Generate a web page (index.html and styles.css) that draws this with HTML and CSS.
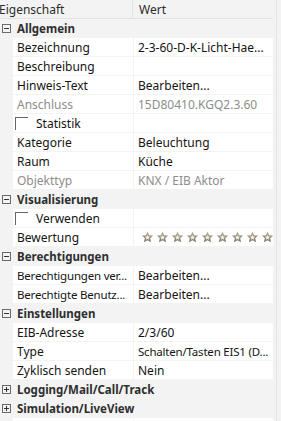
FILE: index.html
```html
<!DOCTYPE html>
<html lang="de">
<head>
<meta charset="utf-8">
<link rel="stylesheet" href="styles.css">
</head>
<body>
<div class="frame">
  <div class="table">
    <div class="header">
      <div class="hcell hname">Eigenschaft</div>
      <div class="hcell hval">Wert</div>
    </div>
    <div class="group"><span class="exp"><svg width="9" height="9" viewBox="0 0 9 9"><rect x="0.5" y="0.5" width="8" height="8" fill="none" stroke="#6a6a6a"/><line x1="2" y1="4.5" x2="7" y2="4.5" stroke="#333"/></svg></span><span class="gtitle">Allgemein</span></div>
    <div class="row"><div class="name">Bezeichnung</div><div class="val">2-3-60-D-K-Licht-Hae...</div></div>
    <div class="row"><div class="name">Beschreibung</div><div class="val"></div></div>
    <div class="row"><div class="name">Hinweis-Text</div><div class="val">Bearbeiten...</div></div>
    <div class="row dis"><div class="name">Anschluss</div><div class="val">15D80410.KGQ2.3.60</div></div>
    <div class="row"><div class="name chk"><span class="box"></span>Statistik</div><div class="val"></div></div>
    <div class="row"><div class="name">Kategorie</div><div class="val">Beleuchtung</div></div>
    <div class="row"><div class="name">Raum</div><div class="val">Küche</div></div>
    <div class="row dis"><div class="name">Objekttyp</div><div class="val">KNX / EIB Aktor</div></div>
    <div class="group"><span class="exp"><svg width="9" height="9" viewBox="0 0 9 9"><rect x="0.5" y="0.5" width="8" height="8" fill="none" stroke="#6a6a6a"/><line x1="2" y1="4.5" x2="7" y2="4.5" stroke="#333"/></svg></span><span class="gtitle">Visualisierung</span></div>
    <div class="row"><div class="name chk"><span class="box"></span>Verwenden</div><div class="val"></div></div>
    <div class="row"><div class="name">Bewertung</div><div class="val stars"><svg width="139" height="18" viewBox="0 0 139 18">
      <defs>
        <linearGradient id="sg" x1="0" y1="0" x2="0" y2="1"><stop offset="0" stop-color="#bdb6a3"/><stop offset="1" stop-color="#7c7461"/></linearGradient>
        <g id="st"><polygon points="5.5,0 7.2,3.7 11.2,4 8.2,6.8 9.1,10.8 5.5,8.7 1.9,10.8 2.8,6.8 -0.2,4 3.8,3.7" fill="url(#sg)"/><polygon points="5.5,3.4 6.2,5.1 8,5.3 6.7,6.5 7,8.2 5.5,7.3 4,8.2 4.3,6.5 3,5.3 4.8,5.1" fill="#f3f1eb"/></g>
      </defs>
      <use href="#st" x="8" y="3.5"/><use href="#st" x="23" y="3.5"/><use href="#st" x="38" y="3.5"/><use href="#st" x="53" y="3.5"/><use href="#st" x="68" y="3.5"/><use href="#st" x="83" y="3.5"/><use href="#st" x="98" y="3.5"/><use href="#st" x="113" y="3.5"/><use href="#st" x="128" y="3.5"/>
    </svg></div></div>
    <div class="group"><span class="exp"><svg width="9" height="9" viewBox="0 0 9 9"><rect x="0.5" y="0.5" width="8" height="8" fill="none" stroke="#6a6a6a"/><line x1="2" y1="4.5" x2="7" y2="4.5" stroke="#333"/></svg></span><span class="gtitle">Berechtigungen</span></div>
    <div class="row"><div class="name tight">Berechtigungen ver...</div><div class="val">Bearbeiten...</div></div>
    <div class="row"><div class="name tight">Berechtigte Benutz...</div><div class="val">Bearbeiten...</div></div>
    <div class="group"><span class="exp"><svg width="9" height="9" viewBox="0 0 9 9"><rect x="0.5" y="0.5" width="8" height="8" fill="none" stroke="#6a6a6a"/><line x1="2" y1="4.5" x2="7" y2="4.5" stroke="#333"/></svg></span><span class="gtitle">Einstellungen</span></div>
    <div class="row"><div class="name">EIB-Adresse</div><div class="val">2/3/60</div></div>
    <div class="row"><div class="name">Type</div><div class="val tight">Schalten/Tasten EIS1 (D...</div></div>
    <div class="row"><div class="name">Zyklisch senden</div><div class="val">Nein</div></div>
    <div class="group"><span class="exp"><svg width="9" height="9" viewBox="0 0 9 9"><rect x="0.5" y="0.5" width="8" height="8" fill="none" stroke="#6a6a6a"/><line x1="2" y1="4.5" x2="7" y2="4.5" stroke="#333"/><line x1="4.5" y1="2" x2="4.5" y2="7" stroke="#333"/></svg></span><span class="gtitle">Logging/Mail/Call/Track</span></div>
    <div class="group"><span class="exp"><svg width="9" height="9" viewBox="0 0 9 9"><rect x="0.5" y="0.5" width="8" height="8" fill="none" stroke="#6a6a6a"/><line x1="2" y1="4.5" x2="7" y2="4.5" stroke="#333"/><line x1="4.5" y1="2" x2="4.5" y2="7" stroke="#333"/></svg></span><span class="gtitle">Simulation/LiveView</span></div>
    <div class="row"><div class="name"></div><div class="val"></div></div>
  </div>
  <div class="gutter"></div>
</div>
</body>
</html>
```
FILE: styles.css
```css
html, body {
  margin: 0;
  padding: 0;
  background: #f3f3f3;
  overflow: hidden;
}
body {
  font-family: "Noto Sans", "Open Sans", sans-serif;
  font-size: 12px;
  color: #141414;
  width: 281px;
  height: 421px;
}
.frame {
  display: flex;
  height: 421px;
  overflow: hidden;
}
.table {
  width: 273px;
  display: flex;
  flex-direction: column;
  row-gap: 1px;
}
.table > * {
  flex-shrink: 0;
}
.gutter {
  width: 0;
  margin-left: 3px;
  border-left: 1px solid #e4e4e4;
}
.header {
  display: flex;
  height: 18px;
  border-bottom: 1px solid #e2e2e2;
  margin-bottom: -1px;
}
.hcell {
  display: flex;
  align-items: center;
  color: #2b2b2b;
  white-space: nowrap;
}
.hname {
  width: 134px;
  margin-left: -1px;
  box-sizing: border-box;
  border-right: 1px solid #e2e2e2;
}
.hval {
  padding-left: 6px;
}
.group {
  height: 19px;
  display: flex;
  align-items: center;
  margin-bottom: -1px;
  white-space: nowrap;
  overflow: hidden;
}
.exp {
  width: 17px;
  padding-left: 2px;
  box-sizing: border-box;
  display: flex;
  align-items: center;
}
.gtitle {
  font-weight: bold;
  font-size: 11.5px;
  color: #2e2e2e;
}
.row {
  height: 18px;
  display: flex;
  column-gap: 1px;
  padding-left: 13px;
}
.name, .val {
  background: #fff;
  display: flex;
  align-items: center;
  white-space: nowrap;
  overflow: hidden;
}
.name {
  width: 120px;
  padding-left: 4px;
  box-sizing: border-box;
}
.val {
  flex: 1;
  padding-left: 4px;
}
.tight {
  font-size: 11.5px;
  letter-spacing: -0.2px;
}
.dis .name, .dis .val {
  color: #8d8d8d;
}
.chk {
  padding-left: 2px;
}
.box {
  width: 12px;
  height: 12px;
  border-top: 1px solid #666;
  border-left: 1px solid #666;
  margin-right: 8px;
}
.stars {
  padding-left: 0;
}
.stars svg {
  display: block;
}
```
